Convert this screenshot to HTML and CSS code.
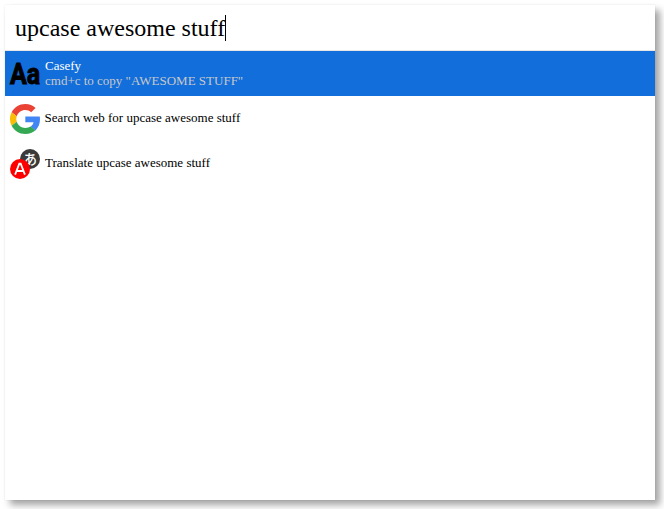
FILE: index.html
```html
<!DOCTYPE html>
<html lang="en">
<head>
<meta charset="utf-8">
<title>Launcher</title>
<link rel="stylesheet" href="styles.css">
</head>
<body>
<main class="window">
  <div class="search"><span class="query">upcase awesome stuff</span><span class="caret"></span></div>
  <ul class="results">
    <li class="row selected">
      <svg class="icon" viewBox="0 0 30 30"><text class="case-glyph" x="0" y="25.4" textLength="30.2" lengthAdjust="spacingAndGlyphs">Aa</text></svg>
      <div class="label"><div class="title">Casefy</div><div class="subtitle">cmd+c to copy "AWESOME STUFF"</div></div>
    </li>
    <li class="row web">
      <svg class="icon" viewBox="0 0 47 48" preserveAspectRatio="none">
        <path fill="#ea4335" d="M24 9.5c3.54 0 6.71 1.22 9.21 3.6l6.85-6.85C35.9 2.38 30.47 0 24 0 14.62 0 6.51 5.38 2.56 13.22l7.98 6.19C12.43 13.72 17.74 9.5 24 9.5z"/>
        <path fill="#4285f4" d="M46.98 24.55c0-1.57-.15-3.09-.38-4.55H24v9.02h12.94c-.58 2.96-2.26 5.48-4.78 7.18l7.73 6c4.51-4.18 7.09-10.36 7.09-17.65z"/>
        <path fill="#fbbc05" d="M10.53 28.59A14.5 14.5 0 0 1 10.53 19.41l-7.98-6.19A24 24 0 0 0 0 24c0 3.88.92 7.54 2.56 10.78z"/>
        <path fill="#34a853" d="M24 48c6.48 0 11.93-2.13 15.89-5.81l-7.73-6c-2.15 1.45-4.92 2.3-8.16 2.3-6.26 0-11.57-4.22-13.47-9.91l-7.98 6.19C6.51 42.62 14.62 48 24 48z"/>
      </svg>
      <div class="label">Search web for upcase awesome stuff</div>
    </li>
    <li class="row">
      <svg class="icon" viewBox="0 0 30 30">
        <circle cx="20" cy="10" r="10" fill="#3a3a3a"/>
        <text class="kana" x="20.3" y="14.8">あ</text>
        <circle cx="10" cy="20" r="10" fill="#f00"/>
        <path d="M5.1 25.6 9.3 14.6h1.4l4.2 11M6.6 22h6.8" fill="none" stroke="#fff" stroke-width="1.8"/>
      </svg>
      <div class="label">Translate upcase awesome stuff</div>
    </li>
  </ul>
</main>
</body>
</html>
```

FILE: styles.css
```css
* { box-sizing: border-box; }
html { height: 100%; }
body {
  margin: 0;
  padding: 5px;
  min-height: 509px;
  background: #fff;
  font: 13px/15px "Liberation Serif", serif;
  color: #000;
}
.window {
  width: 650px;
  height: 495px;
  background: #fff;
  box-shadow: 5px 5px 7px rgba(0, 0, 0, .36), 0 0 1px rgba(0, 0, 0, .12);
}
.search {
  display: flex;
  align-items: center;
  height: 46px;
  padding: 0 10px;
  border-bottom: 1px solid #e6e6e6;
  font-size: 24px;
  line-height: 28px;
}
.caret {
  width: 1px;
  height: 26px;
  background: #000;
}
.results {
  margin: 0;
  padding: 0;
  list-style: none;
}
.row {
  display: flex;
  align-items: center;
  gap: 5px;
  height: 45px;
  padding: 0 5px;
}
.web { gap: 4.5px; }
.selected {
  background: #126edb;
  color: #fff;
}
.label { padding-bottom: 2px; }
.subtitle { color: #c8c8c8; }
.icon {
  flex: none;
  width: 30px;
  height: 30px;
  overflow: visible;
}
.case-glyph {
  font: 700 29.5px Roboto, sans-serif;
  fill: #000;
  stroke: #000;
  stroke-width: 1px;
}
.kana {
  font: 500 13.5px "Noto Sans CJK JP", sans-serif;
  text-anchor: middle;
  fill: #fff;
}
```
